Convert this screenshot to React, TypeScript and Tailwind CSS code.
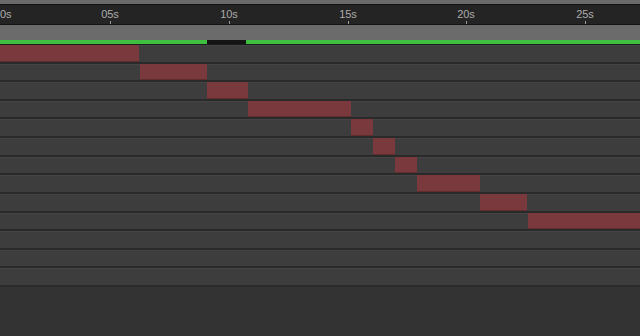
import React from "react";

const ticks = [
  { label: "05s", x: 110 },
  { label: "10s", x: 229 },
  { label: "15s", x: 348 },
  { label: "20s", x: 466 },
  { label: "25s", x: 585 },
];

// layer bars in px along the timeline, one per track
const bars: ({ start: number; end: number } | null)[] = [
  { start: 0, end: 139 },
  { start: 140, end: 207 },
  { start: 207, end: 248 },
  { start: 248, end: 351 },
  { start: 351, end: 373 },
  { start: 373, end: 395 },
  { start: 395, end: 417 },
  { start: 417, end: 480 },
  { start: 480, end: 527 },
  { start: 528, end: 640 },
  null,
  null,
  null,
];

const rowHeights = [19, 18, 19, 18, 19, 19, 18, 19, 19, 18, 19, 18, 19];

const Ruler = () => (
  <div className="relative h-[19px] bg-[#242424] overflow-hidden">
    <span className="absolute left-0 top-[4px] text-[11px] leading-none text-[#acacac]">0s</span>
    {ticks.map((t) => (
      <div key={t.label} className="absolute top-0 h-full" style={{ left: t.x }}>
        <span className="absolute top-[4px] -translate-x-1/2 text-[11px] leading-none text-[#acacac]">
          {t.label}
        </span>
        <div className="absolute top-[16px] h-[3px] w-px bg-[#9a9a9a]" />
      </div>
    ))}
  </div>
);

const WorkArea = () => (
  <div className="flex h-[5px] bg-[#1c1c1c]">
    <div className="w-[207px] h-[4px] bg-[#3fbf3f]" />
    <div className="w-[39px] h-[4px] bg-[#141414]" />
    <div className="flex-1 h-[4px] bg-[#3fbf3f]" />
  </div>
);

const Track = ({ h, bar }: { h: number; bar: { start: number; end: number } | null }) => (
  <div className="flex flex-col bg-[#3d3d3d]" style={{ height: h }}>
    <div className="h-px bg-[#444444]" />
    <div className="relative flex-1">
      {bar && (
        <div
          className="absolute top-[-1px] bottom-0 bg-[#7a3a3d] border-b border-[#5e2d30]"
          style={{ left: bar.start, width: bar.end - bar.start }}
        />
      )}
    </div>
    <div className="h-[2px] bg-[#2a2a2a]" />
  </div>
);

export default function App() {
  return (
    <div className="w-[640px] h-[336px] overflow-hidden bg-[#333333] font-['Liberation_Sans',Arial,sans-serif]">
      <div className="h-[4px] bg-[#6a6a6a]" />
      <div className="h-px bg-[#121212]" />
      <Ruler />
      <div className="h-px bg-[#121212]" />
      <div className="h-[15px] bg-[#6b6b6b]" />
      <WorkArea />
      <div className="flex flex-col">
        {rowHeights.map((h, i) => (
          <Track key={i} h={h} bar={bars[i]} />
        ))}
      </div>
    </div>
  );
}
